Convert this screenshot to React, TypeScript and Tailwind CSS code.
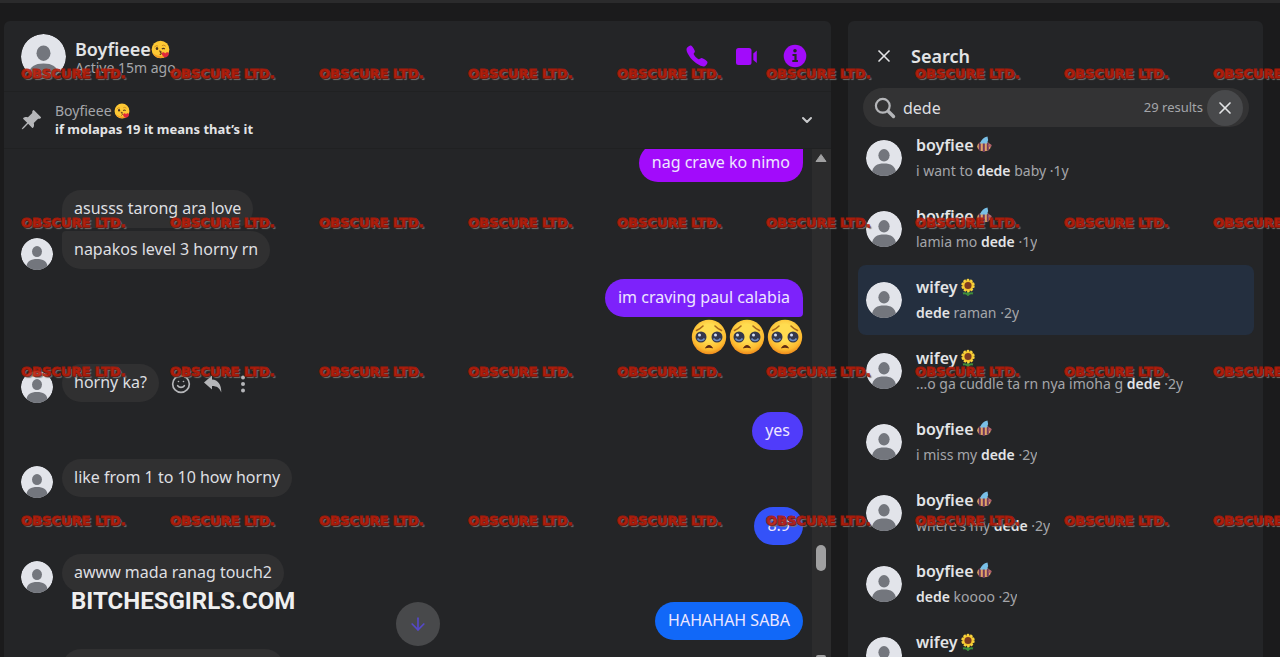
import type { ReactNode } from "react";
import { ChevronDown, X, Smile, ArrowDown } from "lucide-react";
import { IoCall } from "react-icons/io5";
import { BsPinAngleFill } from "react-icons/bs";

function Avatar({ size }: { size: string }) {
  return (
    <svg viewBox="0 0 36 36" className={`${size} shrink-0 rounded-full`} aria-hidden="true">
      <circle cx="18" cy="18" r="18" fill="#e2e4ea" />
      <ellipse cx="18" cy="15.3" rx="5.6" ry="6.2" fill="#73767d" />
      <path d="M6 32c1-6 5-8.500 12-8.500S29 26 30 32a18 18 0 0 1-24 0Z" fill="#73767d" />
    </svg>
  );
}

function KissEmoji({ size }: { size: string }) {
  return (
    <svg viewBox="0 0 20 20" className={`${size} shrink-0`} role="img" aria-label="kiss">
      <circle cx="10" cy="10" r="9.300" fill="#fdc834" />
      <path d="M2 14a9.300 9.300 0 0 0 15 2c-5 2-11 1-15-2Z" fill="#f59a23" />
      <path d="M3.500 7.500q2-2.500 4-1M11.500 6q2-1.500 4 .5" stroke="#c98a1d" strokeWidth="1" fill="none" />
      <ellipse cx="6.300" cy="9" rx="1.300" ry="1.600" fill="#4b3420" />
      <path d="M11.500 9.500q1.500-1.500 3 0" stroke="#4b3420" strokeWidth="1.300" fill="none" />
      <path d="M8.500 11.500q3 0 1.500 1.700q2 .8-.8 2.300" stroke="#5b3218" strokeWidth="1.100" fill="none" />
      <path d="M15 18.500c-4-1.500-4.500-5-2.300-5.500 1.300-.3 2 .8 2.300 1.300.5-1.300 2-2 3.300-1 1.700 1.700-.8 4.300-3.300 5.200Z" fill="#e0283c" />
    </svg>
  );
}

function PleadingEmoji() {
  return (
    <svg viewBox="0 0 36 36" className="size-9" role="img" aria-label="pleading face">
      <defs>
        <radialGradient id="face" cx="50%" cy="38%" r="62%">
          <stop offset="0.4" stopColor="#ffdc50" />
          <stop offset="0.8" stopColor="#fcb92f" />
          <stop offset="1" stopColor="#ee8a1c" />
        </radialGradient>
      </defs>
      <circle cx="18" cy="18" r="17.200" fill="url(#face)" />
      <path d="M5.500 11.500Q9 10 12 7M30.500 11.500Q27 10 24 7" stroke="#a7661b" strokeWidth="1.600" fill="none" strokeLinecap="round" />
      <circle cx="10" cy="18" r="5.500" fill="#34384c" />
      <circle cx="26" cy="18" r="5.500" fill="#34384c" />
      <path d="M6.500 19.500a4 4 0 0 0 7 0M22.500 19.500a4 4 0 0 0 7 0" fill="none" stroke="#6f8fc4" strokeWidth="1.600" />
      <circle cx="8.500" cy="16" r="1.500" fill="#d5e0f7" />
      <circle cx="24.500" cy="16" r="1.500" fill="#d5e0f7" />
      <path d="M14.500 28.800q3.500-4.600 7 0q-3.500-1.300-7 0Z" fill="#5c2a12" stroke="#5c2a12" strokeLinejoin="round" />
    </svg>
  );
}

function Sunflower() {
  return (
    <svg viewBox="0 0 16 18" className="h-[18px] w-4" role="img" aria-label="sunflower">
      <path d="M8 12v5M3 15.500q3-1 5 1.500q2-2.500 5-1.500" stroke="#3f8f3c" strokeWidth="2" fill="none" />
      <circle cx="8" cy="7.500" r="5.600" fill="#f5c52c" stroke="#f8d23c" strokeWidth="2.200" strokeDasharray="2.400 1.100" />
      <circle cx="8" cy="7.500" r="3.500" fill="#7b3a22" />
    </svg>
  );
}

function Bee() {
  return (
    <svg viewBox="0 0 16 18" className="h-[18px] w-4" role="img" aria-label="bee">
      <ellipse cx="8" cy="10.500" rx="6.800" ry="4.800" fill="#e0a565" />
      <path d="M3.800 6.800v7.800M7.800 6v10M11.800 6.800v7.800" stroke="#70385e" strokeWidth="2" />
      <path d="M4 7.500q2-6 7.500-7q1.500 3.500-.5 7Z" fill="#79bfe6" />
      <circle cx="14" cy="9.500" r="1.600" fill="#b0606a" />
    </svg>
  );
}

type Message =
  | { kind: "in"; text: string; hideAvatar?: boolean; tools?: boolean; gap: string; shape: string }
  | { kind: "out"; text: string; gap: string; shape: string }
  | { kind: "emoji" };

const messages: Message[] = [
  { kind: "out", text: "nag crave ko nimo", gap: "", shape: "bg-[#a20bfb] rounded-[19px] rounded-tr-[4px]" },
  { kind: "in", text: "asusss tarong ara love", gap: "mt-2", hideAvatar: true, shape: "rounded-[19px] rounded-bl-[4px]" },
  { kind: "in", text: "napakos level 3 horny rn", gap: "mt-[3px]", shape: "rounded-[19px] rounded-tl-[4px]" },
  { kind: "out", text: "im craving paul calabia", gap: "mt-[10px]", shape: "bg-[#7d22fb] rounded-[19px] rounded-br-[4px]" },
  { kind: "emoji" },
  { kind: "in", text: "horny ka?", gap: "mt-[9px]", tools: true, shape: "rounded-[19px]" },
  { kind: "out", text: "yes", gap: "mt-[10px]", shape: "bg-[#503cfa] rounded-[19px]" },
  { kind: "in", text: "like from 1 to 10 how horny", gap: "mt-[9px]", shape: "rounded-[19px]" },
  { kind: "out", text: "8.9", gap: "mt-[10px]", shape: "bg-[#3452f8] rounded-[19px]" },
  { kind: "in", text: "awww mada ranag touch2", gap: "mt-[9px]", shape: "rounded-[19px]" },
  { kind: "out", text: "HAHAHAH SABA", gap: "mt-[10px]", shape: "bg-[#1168f8] rounded-[19px]" },
];

function MessageRow({ message }: { message: Message }) {
  if (message.kind === "emoji") {
    return (
      <li className="mt-[2px] flex h-9 justify-end gap-[2px]">
        <PleadingEmoji />
        <PleadingEmoji />
        <PleadingEmoji />
      </li>
    );
  }
  if (message.kind === "out") {
    return (
      <li className={`flex justify-end ${message.gap}`}>
        <p className={`h-[38px] px-[13px] leading-9 text-[#eee6ff] ${message.shape}`}>{message.text}</p>
      </li>
    );
  }
  return (
    <li className={`flex items-end ${message.gap}`}>
      <div className="-mb-px w-[41px]">{!message.hideAvatar && <Avatar size="size-8" />}</div>
      <p className={`h-[38px] bg-[#303031] px-3 leading-9 text-[#dedfe1] ${message.shape}`}>{message.text}</p>
      {message.tools && (
        <div className="mb-2 ml-3 flex items-center gap-3 text-[#b5b6b9]">
          <button type="button" aria-label="React"><Smile className="size-5" strokeWidth={2} /></button>
          <button type="button" aria-label="Reply">
            <svg viewBox="0 0 20 20" className="size-5" fill="currentColor">
              <path d="M1 8.500 9 1.500v4c6 .5 9.500 5 9.300 13C16.500 14 14 12 9 12V15.500Z" />
            </svg>
          </button>
          <button type="button" aria-label="More">
            <svg viewBox="0 0 16 20" className="h-5 w-4" fill="currentColor">
              <circle cx="8" cy="3.500" r="2" /><circle cx="8" cy="10" r="2" /><circle cx="8" cy="16.500" r="2" />
            </svg>
          </button>
        </div>
      )}
    </li>
  );
}

type Result = { name: string; before: string; after: string; age: string; active?: boolean };

const results: Result[] = [
  { name: "boyfiee", before: "i want to ", after: " baby", age: "1y" },
  { name: "boyfiee", before: "lamia mo ", after: "", age: "1y" },
  { name: "wifey", before: "", after: " raman", age: "2y", active: true },
  { name: "wifey", before: "...o ga cuddle ta rn nya imoha g ", after: "", age: "2y" },
  { name: "boyfiee", before: "i miss my ", after: "", age: "2y" },
  { name: "boyfiee", before: "where's my ", after: "", age: "2y" },
  { name: "boyfiee", before: "", after: " koooo", age: "2y" },
];

function ResultRow({ result }: { result: Result }) {
  return (
    <li className="pb-px">
      <a href="#result" className={`flex h-[70px] items-center gap-[14px] rounded-lg px-2 ${result.active ? "bg-[#242f3f]" : ""}`}>
        <Avatar size="size-9" />
        <span className="flex min-w-0 flex-col gap-1">
          <ResultName name={result.name} />
          <span className="truncate text-[14px] leading-[22px] text-[#a4a6aa]">
            {result.before}
            <b className="font-semibold text-[#e3e4e6]">dede</b>
            {result.after} ·{result.age}
          </span>
        </span>
      </a>
    </li>
  );
}

function ResultName({ name }: { name: string }) {
  return (
    <span className="flex items-center gap-[2px] text-[16px] leading-[22px] font-semibold text-[#e3e4e6]">
      {name}
      {name === "wifey" ? <Sunflower /> : <Bee />}
    </span>
  );
}

function IconButton({ label, children }: { label: string; children: ReactNode }) {
  return (
    <button type="button" aria-label={label} className="flex size-6 items-center justify-center">
      {children}
    </button>
  );
}

function Watermark() {
  return (
    <div className="pointer-events-none absolute inset-0 overflow-hidden pt-[61px] pl-[21px]" aria-hidden="true">
      <div className="grid auto-rows-[149px] grid-cols-[repeat(9,149px)]">
        {Array.from({ length: 36 }, (_, i) => (
          <span
            key={i}
            className="font-['DejaVu_Sans',sans-serif] text-[13px] leading-5 font-bold whitespace-nowrap text-[#c4200c] opacity-90 [-webkit-text-stroke:1px_#ad1a08] [text-shadow:1px_1px_0_#4a1510,2px_2px_1px_#7d7974]"
          >
            OBSCURE LTD.
          </span>
        ))}
      </div>
    </div>
  );
}

export default function App() {
  return (
    <div className="relative flex h-screen gap-[17px] overflow-hidden border-t-[3px] border-[#2b2b2c] bg-[#1b1b1c] pt-[18px] pr-[17px] pl-1 font-['Noto_Sans',sans-serif] text-[16px]">
      <main className="relative flex min-w-0 flex-[827] flex-col rounded-t-md bg-[#242527]">
        <header className="flex h-[71px] shrink-0 items-center border-b border-[#202122] pr-6 pl-[17px]">
          <Avatar size="size-[45px]" />
          <div className="ml-[9px] flex-1 pt-1">
            <h1 className="flex items-center text-[18px] leading-5 font-semibold text-[#e3e4e6]">
              Boyfieee
              <KissEmoji size="size-[19px]" />
            </h1>
            <p className="text-[14px] leading-[18px] text-[#a4a6aa]">Active 15m ago</p>
          </div>
          <div className="flex gap-[25px] text-[#a20bfb]">
            <IconButton label="Call"><IoCall className="size-6 shrink-0" /></IconButton>
            <IconButton label="Video call">
              <svg viewBox="0 0 24 24" className="size-6" fill="currentColor">
                <rect x="2" y="4" width="15.500" height="17" rx="2.500" />
                <path d="M19.300 9.500 22.800 6.500v12.500l-3.500-3Z" />
              </svg>
            </IconButton>
            <IconButton label="Information">
              <svg viewBox="0 0 24 24" className="size-6">
                <circle cx="12" cy="12" r="11.300" fill="currentColor" />
                <circle cx="12" cy="6.800" r="1.800" fill="#242527" />
                <path d="M9.500 11h3v5.500M9.300 17h5.600" stroke="#242527" strokeWidth="2.200" fill="none" />
              </svg>
            </IconButton>
          </div>
        </header>

        <section className="flex h-[57px] shrink-0 items-center border-b border-[#202122] pr-4 pl-4">
          <BsPinAngleFill className="size-[22px] text-[#b5b6b9]" />
          <div className="ml-[13px] flex-1">
            <p className="flex items-center gap-[2px] text-[14px] leading-[18px] text-[#a4a6aa]">
              Boyfieee <KissEmoji size="size-4" />
            </p>
            <p className="text-[13px] leading-[18px] font-bold text-[#e3e4e6]">if molapas 19 it means that’s it</p>
          </div>
          <button type="button" aria-label="Show pinned"><ChevronDown className="size-4 text-[#c9cacc]" strokeWidth={3} /></button>
        </section>

        <div className="flex min-h-0 flex-1">
          <div className="min-w-0 flex-1 overflow-hidden pr-[9px] pl-[17px]">
            <ul className="-mt-[5px] flex flex-col">
              {messages.map((message, i) => (
                <MessageRow key={i} message={message} />
              ))}
              <li className="mt-[9px] ml-[41px] h-[38px] w-[222px] rounded-[19px] bg-[#303031]" />
            </ul>
          </div>
          <div className="flex w-[19px] flex-col items-center bg-[#2c2c2d] pt-1 pr-[2px]">
            <svg viewBox="0 0 12 10" className="h-[10px] w-3"><path d="M6 1.500 11 8.500H1Z" fill="#a0a0a1" stroke="#a0a0a1" strokeLinejoin="round" /></svg>
            <div className="flex-[382]" />
            <div className="h-[26px] w-[10px] rounded-full bg-[#a0a0a1]" />
            <div className="flex-[84]" />
            <div className="h-[2px] w-[10px] rounded-t-sm bg-[#a0a0a1]" />
          </div>
        </div>

        <button type="button" aria-label="Scroll to latest" className="absolute bottom-[11px] left-1/2 flex size-11 -translate-x-1/2 items-center justify-center rounded-full bg-[#48494b] text-[#5548c8]">
          <ArrowDown className="size-5" strokeWidth={2} />
        </button>
      </main>

      <aside className="flex min-w-0 flex-[415] flex-col overflow-hidden rounded-t-md bg-[#242527]">
        <div className="flex h-[67px] shrink-0 items-center gap-[17px] pt-[2px] pl-[26px]">
          <button type="button" aria-label="Close search"><X className="size-5 text-[#e3e4e6]" strokeWidth={2} /></button>
          <h2 className="text-[18px] leading-6 font-semibold text-[#e3e4e6]">Search</h2>
        </div>
        <div className="mr-[14px] ml-[15px] flex h-[39px] shrink-0 items-center rounded-full bg-[#333334] pr-[6px] pl-[11px]">
          <svg viewBox="0 0 22 22" className="size-[22px] shrink-0" fill="none" stroke="#b5b6b9">
            <circle cx="8.800" cy="8.800" r="6.900" strokeWidth="2.200" />
            <path d="m14.500 14.500 5 5" strokeWidth="3.400" strokeLinecap="round" />
          </svg>
          <input aria-label="Search in conversation" defaultValue="dede" className="ml-[7px] min-w-0 flex-1 bg-transparent text-[16px] text-[#dedfe1] outline-none" />
          <span className="mr-1 text-[13px] text-[#a4a6aa]">29 results</span>
          <button type="button" aria-label="Clear search" className="flex size-9 items-center justify-center rounded-full bg-[#48494b] text-[#e3e4e6]">
            <X className="size-5" strokeWidth={2} />
          </button>
        </div>
        <ul className="-mt-1 pr-[9px] pl-[10px]">
          {results.map((result, i) => (
            <ResultRow key={i} result={result} />
          ))}
          <li>
            <a href="#result" className="flex items-start gap-[14px] px-2 pt-[11px]">
              <span className="pt-[6px]"><Avatar size="size-9" /></span>
              <ResultName name="wifey" />
            </a>
          </li>
        </ul>
      </aside>

      <Watermark />
      <p className="pointer-events-none absolute bottom-11 left-[71px] font-['Roboto',sans-serif] text-[24px] leading-6 font-bold text-[#efefef]">BITCHESGIRLS.COM</p>
    </div>
  );
}
